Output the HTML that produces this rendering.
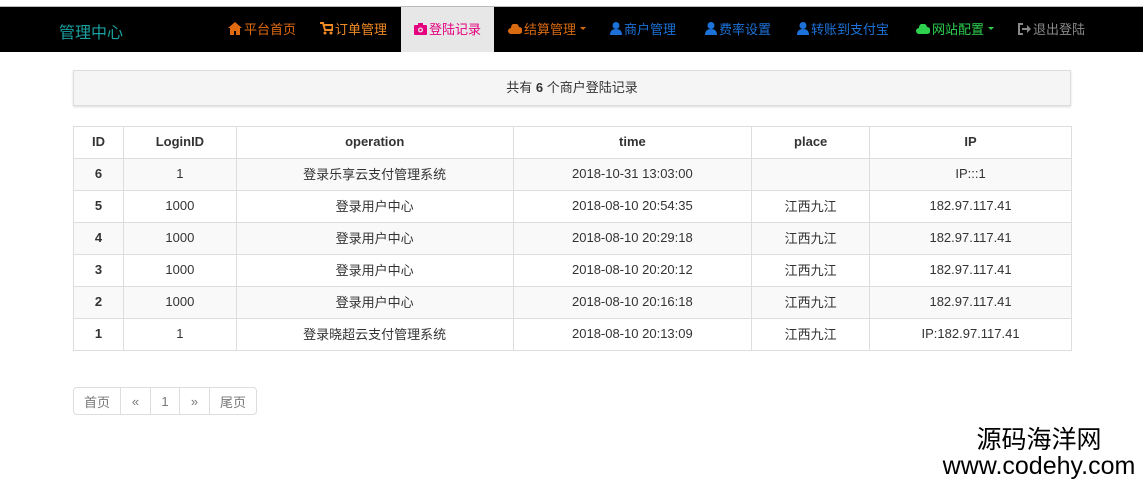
<!DOCTYPE html>
<html><head><meta charset="utf-8"><style>
body{margin:0;width:1143px;height:485px;background:#fff;font-family:"Liberation Sans","Noto Sans CJK SC",sans-serif;font-size:13px;color:#333;position:relative;overflow:hidden}
.top{position:absolute;left:0;top:0;width:1143px;height:7px;background:#fff;border-bottom:1px solid #bbb;box-sizing:border-box}
.nav{position:absolute;left:0;top:7px;width:1143px;height:45px;background:#000}
.brand{position:absolute;left:59px;top:12px;font-size:16px;color:#1aa0a0}
.it{position:absolute;top:12px;font-size:13px;white-space:nowrap;display:flex;align-items:center;gap:2px}
.act{position:absolute;left:401px;top:0;width:93px;height:45px;background:#e7e7e7}
.car{display:inline-block;border-left:3px solid transparent;border-right:3px solid transparent;border-top:3px solid currentColor;margin-left:2px}
.panel{position:absolute;left:73px;top:70px;width:998px;height:36px;background:#f5f5f5;border:1px solid #ddd;box-sizing:border-box;box-shadow:0 1px 2px rgba(0,0,0,.15);text-align:center;line-height:33px;font-size:13px}
table{position:absolute;left:73px;top:126px;border-collapse:collapse;width:999px;font-size:13px}
td,th{border:1px solid #ddd;height:29px;padding:0 0 2px;text-align:center}
th{font-weight:bold}
tbody tr:nth-child(odd){background:#f9f9f9}
td:first-child{font-weight:bold}
.pg{position:absolute;left:73px;top:387px;display:flex;border:1px solid #ddd;border-radius:4px;height:28px;box-sizing:border-box;color:#777}
.pg span{display:flex;align-items:center;justify-content:center;border-left:1px solid #ddd;height:26px;flex:none}
.pg span:first-child{border-left:0}
.wm{position:absolute;left:930px;top:427px;width:218px;text-align:center;color:#000;line-height:26px}
</style></head><body>
<div class="top"></div>
<div class="nav">
<div class="brand">管理中心</div>
<div class="act"></div>
<div class="it" style="left:228px;color:#e06a10"><svg width="14" height="13" viewBox="0 0 14 13"><path d="M7 0L0 6h2v7h4V9h2v4h4V6h2z" fill="currentColor"/></svg>平台首页</div>
<div class="it" style="left:320px;color:#f08a24"><svg width="13" height="13" viewBox="0 0 13 13"><path d="M0 1h3l2 7h7l1-5H4" fill="none" stroke="currentColor" stroke-width="2"/><circle cx="5" cy="11" r="1.5" fill="currentColor"/><circle cx="11" cy="11" r="1.5" fill="currentColor"/></svg>订单管理</div>
<div class="it" style="left:414px;color:#e4007f"><svg width="13" height="12" viewBox="0 0 13 12"><rect x="0" y="2" width="13" height="10" rx="1" fill="currentColor"/><rect x="4" y="0" width="5" height="3" fill="currentColor"/><circle cx="6.5" cy="7" r="2.5" fill="#e7e7e7"/><circle cx="6.5" cy="7" r="1.2" fill="currentColor"/></svg>登陆记录</div>
<div class="it" style="left:508px;color:#d86a10"><svg width="14" height="10" viewBox="0 0 14 10"><path d="M3 10a3 3 0 010-6 4 4 0 018-1 3.5 3.5 0 010 7z" fill="currentColor"/></svg>结算管理<i class="car"></i></div>
<div class="it" style="left:610px;color:#1c72d8"><svg width="12" height="13" viewBox="0 0 12 13"><circle cx="6" cy="3.5" r="3.5" fill="currentColor"/><path d="M0 13c0-4 2-6 6-6s6 2 6 6z" fill="currentColor"/></svg>商户管理</div>
<div class="it" style="left:705px;color:#1c72d8"><svg width="12" height="13" viewBox="0 0 12 13"><circle cx="6" cy="3.5" r="3.5" fill="currentColor"/><path d="M0 13c0-4 2-6 6-6s6 2 6 6z" fill="currentColor"/></svg>费率设置</div>
<div class="it" style="left:797px;color:#1c72d8"><svg width="12" height="13" viewBox="0 0 12 13"><circle cx="6" cy="3.5" r="3.5" fill="currentColor"/><path d="M0 13c0-4 2-6 6-6s6 2 6 6z" fill="currentColor"/></svg>转账到支付宝</div>
<div class="it" style="left:916px;color:#2ed050"><svg width="14" height="10" viewBox="0 0 14 10"><path d="M3 10a3 3 0 010-6 4 4 0 018-1 3.5 3.5 0 010 7z" fill="currentColor"/></svg>网站配置<i class="car"></i></div>
<div class="it" style="left:1018px;color:#888"><svg width="13" height="12" viewBox="0 0 13 12"><path d="M5 1H1v10h4" fill="none" stroke="currentColor" stroke-width="2"/><path d="M4 5h5V2l4 4-4 4V7H4z" fill="currentColor"/></svg>退出登陆</div>
</div>
<div class="panel">共有 <b>6</b> 个商户登陆记录</div>
<table>
<colgroup><col style="width:50px"><col style="width:113px"><col style="width:277px"><col style="width:239px"><col style="width:118px"><col style="width:202px"></colgroup>
<thead><tr><th>ID</th><th>LoginID</th><th>operation</th><th>time</th><th>place</th><th>IP</th></tr></thead>
<tbody>
<tr><td>6</td><td>1</td><td>登录乐享云支付管理系统</td><td>2018-10-31 13:03:00</td><td></td><td>IP:::1</td></tr>
<tr><td>5</td><td>1000</td><td>登录用户中心</td><td>2018-08-10 20:54:35</td><td>江西九江</td><td>182.97.117.41</td></tr>
<tr><td>4</td><td>1000</td><td>登录用户中心</td><td>2018-08-10 20:29:18</td><td>江西九江</td><td>182.97.117.41</td></tr>
<tr><td>3</td><td>1000</td><td>登录用户中心</td><td>2018-08-10 20:20:12</td><td>江西九江</td><td>182.97.117.41</td></tr>
<tr><td>2</td><td>1000</td><td>登录用户中心</td><td>2018-08-10 20:16:18</td><td>江西九江</td><td>182.97.117.41</td></tr>
<tr><td>1</td><td>1</td><td>登录晓超云支付管理系统</td><td>2018-08-10 20:13:09</td><td>江西九江</td><td>IP:182.97.117.41</td></tr>
</tbody></table>
<div class="pg"><span style="width:46px">首页</span><span style="width:29px">«</span><span style="width:28px">1</span><span style="width:29px">»</span><span style="width:46px">尾页</span></div>
<div class="wm"><div style="font-size:25px">源码海洋网</div><div style="font-size:25px">www.codehy.com</div></div>
</body></html>
